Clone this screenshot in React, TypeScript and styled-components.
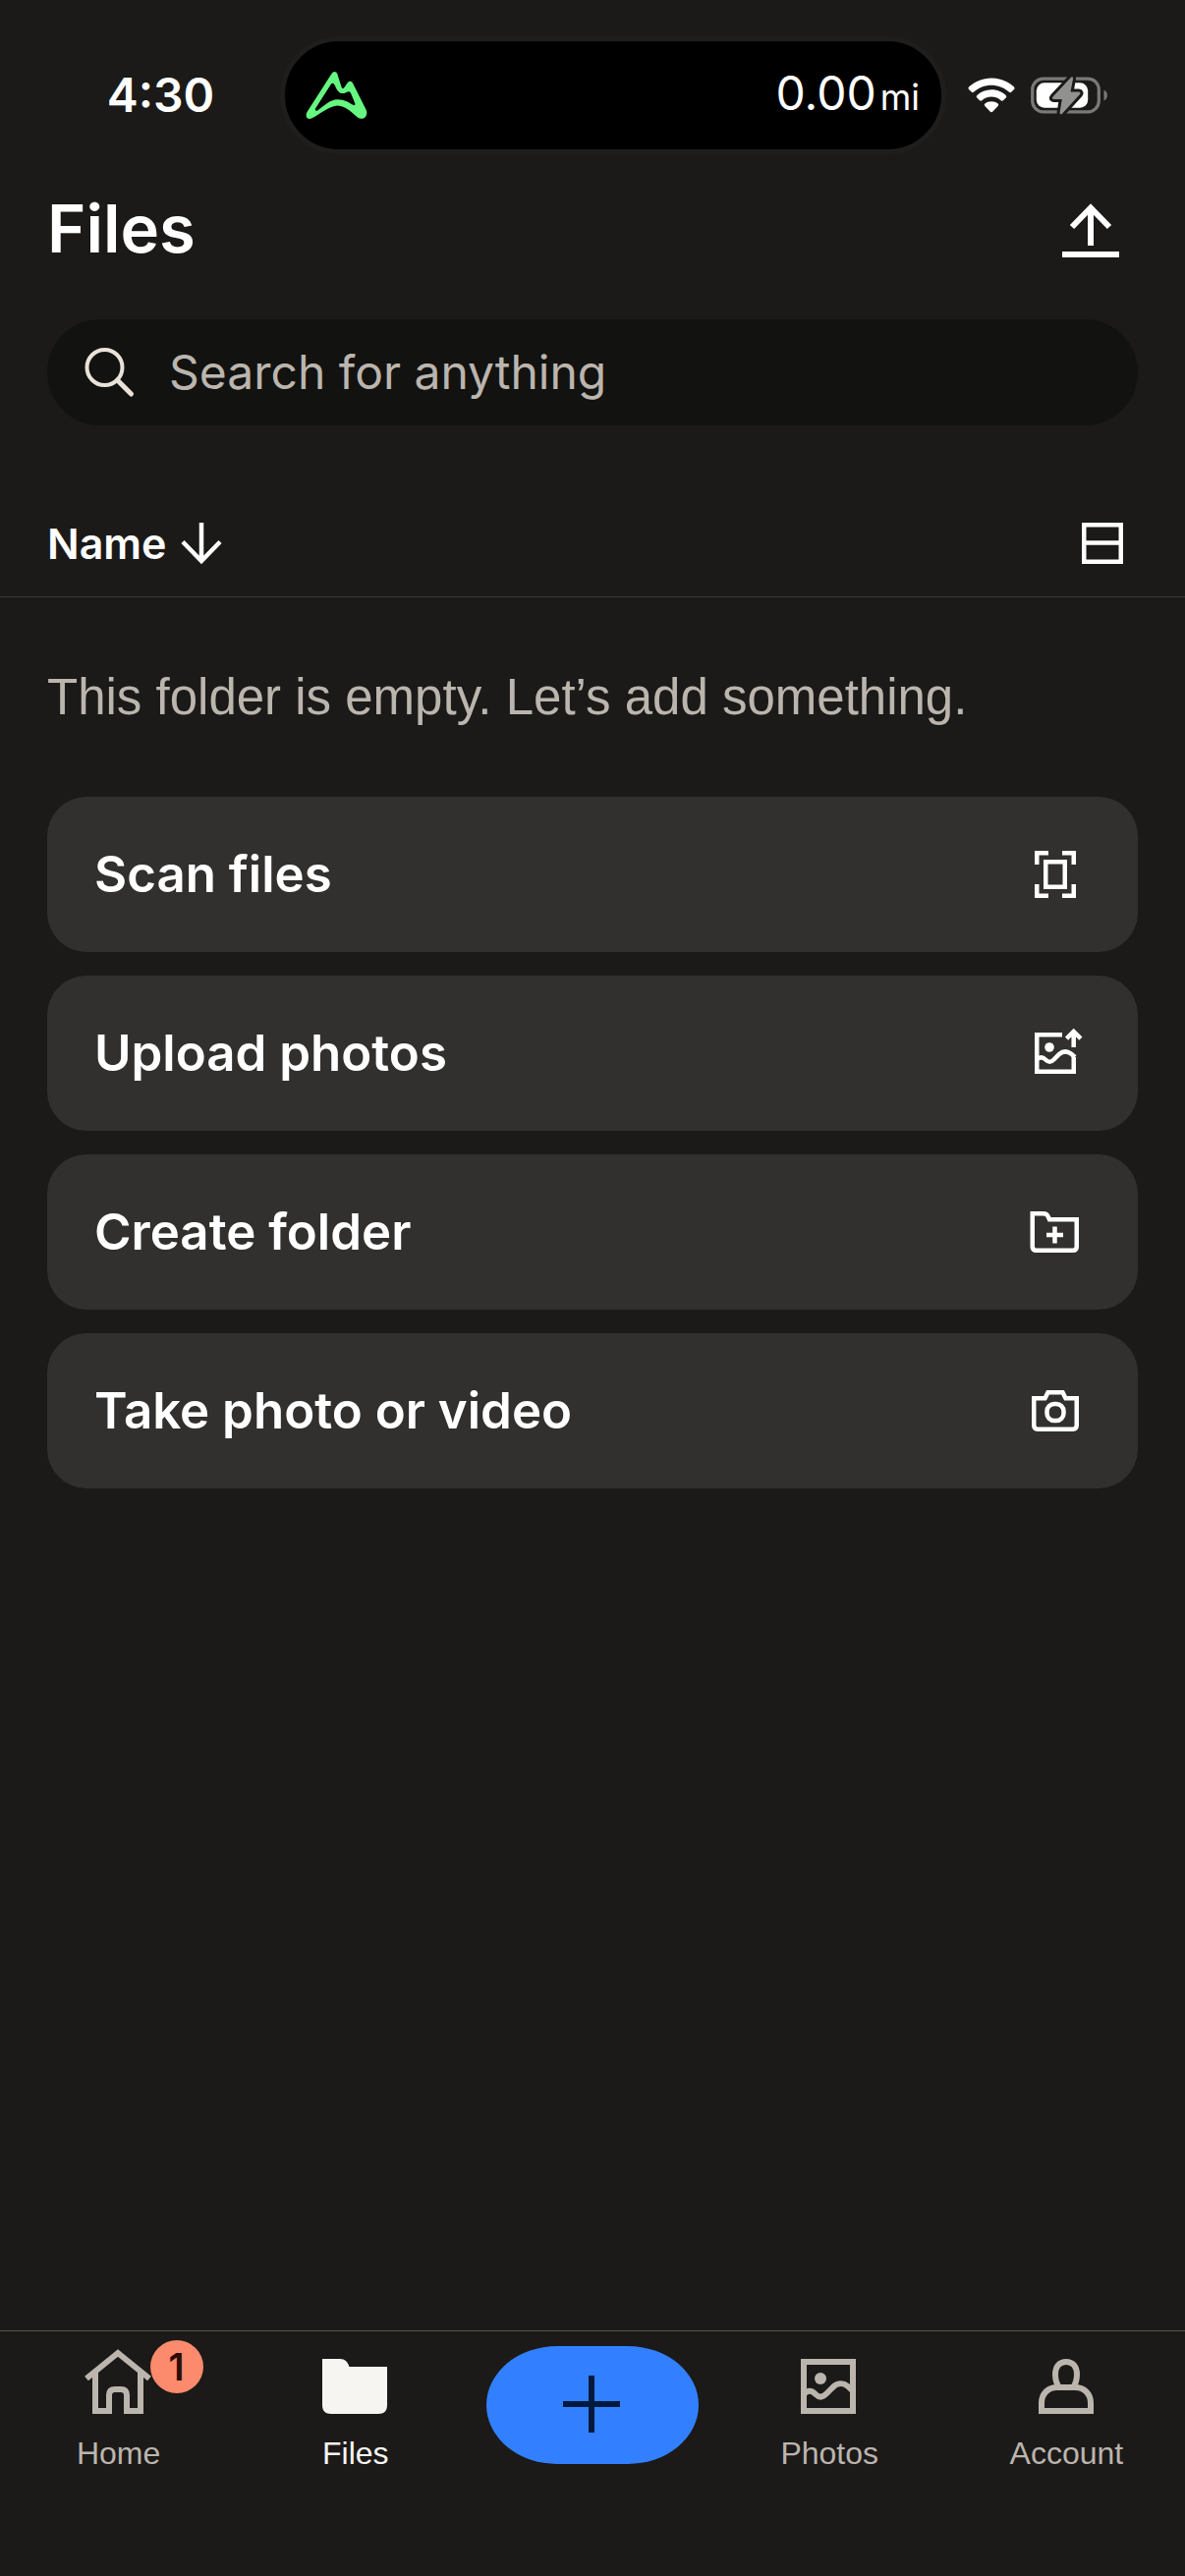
import React from "react";
import styled, { createGlobalStyle } from "styled-components";

const sans = `Inter, "Liberation Sans", sans-serif`;
const grotesk = `"Liberation Sans", Arial, sans-serif`;

const color = {
  page: "#1b1a18",
  field: "#121210",
  card: "#31302e",
  text: "#ffffff",
  muted: "#bbb5ae",
  line: "#3a3937",
  tabLine: "#57544a",
  accent: "#3280ff",
  badge: "#fb8b6c",
};

const GlobalStyle = createGlobalStyle`
  *, *::before, *::after { box-sizing: border-box; }
  body { margin: 0; background: ${color.page}; }
  button { border: 0; padding: 0; margin: 0; background: none; color: inherit; cursor: pointer; }
  svg { display: block; flex: none; }
`;

const Screen = styled.div`
  display: flex;
  flex-direction: column;
  min-height: 100vh;
  background: ${color.page};
  color: ${color.text};
  font-family: ${sans};
`;

const StatusBar = styled.div`
  display: grid;
  grid-template-columns: 1fr 678px 1fr;
  align-items: center;
  padding: 37px 0 0 42px;
`;

const Clock = styled.time`
  justify-self: center;
  font-size: 48px;
  line-height: 60px;
  font-weight: 600;
`;

const Island = styled.div`
  display: flex;
  align-items: center;
  justify-content: space-between;
  height: 120px;
  padding: 0 22px 0 21px;
  border: 5px solid #1f1e1d;
  border-radius: 60px;
  background: #000;
`;

const Distance = styled.span`
  font-size: 48px;
  line-height: 60px;

  small {
    padding-left: 4px;
    font-size: 36px;
  }
`;

const StatusIcons = styled.div`
  display: flex;
  align-items: center;
  gap: 16px;
  padding-left: 22px;
`;

const Header = styled.header`
  display: flex;
  align-items: center;
  justify-content: space-between;
  padding: 28px 60px 0 48px;
`;

const Title = styled.h1`
  margin: 0;
  font-size: 67px;
  line-height: 96px;
  font-weight: 600;
`;

const IconButton = styled.button`
  display: flex;
`;

const SearchField = styled.label`
  display: flex;
  align-items: center;
  gap: 32px;
  height: 108px;
  margin: 44px 48px 0;
  padding: 0 36px;
  border-radius: 54px;
  background: ${color.field};
`;

const SearchInput = styled.input`
  flex: 1;
  min-width: 0;
  padding: 0;
  border: 0;
  outline: 0;
  background: none;
  color: ${color.text};
  font-family: ${sans};
  font-size: 48px;
  line-height: 60px;

  &::placeholder {
    color: ${color.muted};
    opacity: 1;
  }
`;

const SortBar = styled.div`
  display: flex;
  align-items: center;
  justify-content: space-between;
  height: 108px;
  margin-top: 67px;
  padding: 0 48px 2px;
  border-bottom: 1px solid ${color.line};
`;

const SortButton = styled.button`
  display: flex;
  align-items: center;
  font-family: ${sans};
  font-size: 43px;
  line-height: 60px;
  font-weight: 600;
`;

const Content = styled.main`
  flex: 1;
  padding: 68px 48px;
`;

const EmptyNote = styled.p`
  margin: 0 0 67px;
  color: ${color.muted};
  font-family: ${grotesk};
  font-size: 51px;
  line-height: 68px;
`;

const ActionList = styled.ul`
  display: grid;
  gap: 24px;
  margin: 0;
  padding: 0;
  list-style: none;
`;

const ActionCard = styled.button`
  display: flex;
  align-items: center;
  justify-content: space-between;
  width: 100%;
  height: 158px;
  padding: 0 48px;
  border-radius: 40px;
  background: ${color.card};
  font-family: ${sans};
  font-size: 51px;
  line-height: 60px;
  font-weight: 600;
`;

const TabBar = styled.nav`
  display: grid;
  grid-template-columns: repeat(5, 1fr);
  justify-items: center;
  align-items: start;
  height: 250px;
  border-top: 1px solid ${color.tabLine};
`;

const Tab = styled.a<{ $active?: boolean }>`
  position: relative;
  display: flex;
  flex-direction: column;
  align-items: center;
  padding-top: 8px;
  color: ${(p) => (p.$active ? "#f7f5f2" : color.muted)};
  font-family: ${grotesk};
  font-size: 32px;
  line-height: 40px;
  text-decoration: none;
`;

const Badge = styled.span`
  position: absolute;
  top: 9px;
  left: calc(50% + 32px);
  width: 54px;
  height: 54px;
  border-radius: 27px;
  background: ${color.badge};
  color: #2d0c06;
  font-family: ${sans};
  font-size: 38px;
  line-height: 54px;
  font-weight: 600;
  text-align: center;
`;

const AddButton = styled.button`
  display: flex;
  align-items: center;
  justify-content: center;
  width: 216px;
  height: 120px;
  margin-top: 15px;
  border-radius: 72px / 60px;
  background: ${color.accent};
`;

const Stroke = ({
  size,
  width,
  children,
}: {
  size: number;
  width: number;
  children: React.ReactNode;
}) => (
  <svg
    width={size}
    height={size}
    viewBox={`0 0 ${size} ${size}`}
    fill="none"
    stroke="currentColor"
    strokeWidth={width}
    aria-hidden="true"
  >
    {children}
  </svg>
);

const MountainLogo = () => (
  <svg width="64" height="50" viewBox="0 0 64 50" aria-hidden="true">
    <path
      fill="#66f780"
      fillRule="evenodd"
      d="M26.5 3C28 .3 31.200 .3 32.300 3.200L36.500 16.500C37.200 18.600 38.500 18.600 39.600 16.800L42.500 12.500C44 10.200 47 10.200 48.200 13L61.500 39.500C64.500 46 58.500 51.500 53 47.500C48.500 44.300 41.500 35.500 32.500 35.500C25 35.500 14 44.500 6.500 48.300C2 50.500-1 46.500 1.500 42ZM28.800 13.300C27.600 12.300 26.400 12.700 25.500 14.200L10.300 38C9 40.300 10.400 41.500 12.500 40.200C18.500 36 24.500 29.200 32.500 29.200C40.500 29.200 44 32.500 48.300 34.800C50 35.700 50.800 34.800 50.200 33L46 22.800C45.200 21 43.800 20.800 42 21.700C39.500 23.400 36 23.600 33.800 21.500C31.300 19.500 30.500 15.500 28.800 13.300Z"
    />
  </svg>
);

const WifiIcon = () => (
  <svg width="48" height="36" viewBox="0 0 48 36" fill="#fff" aria-hidden="true">
    <path d="M24 .5C15 .5 7 4 1.200 9.300C.3 10.200.3 11.200 1 12L3.600 14.600C4.400 15.400 5.300 15.300 6.200 14.600C11 10.300 17.200 7.800 24 7.800S37 10.300 41.800 14.600C42.700 15.300 43.600 15.400 44.400 14.600L47 12C47.700 11.200 47.700 10.200 46.800 9.300C41 4 33 .5 24 .5Z" />
    <path d="M24 12.300C18.300 12.300 13.200 14.400 9.300 17.900C8.500 18.700 8.500 19.700 9.300 20.500L12 23.200C12.800 23.900 13.600 23.800 14.400 23.200C17 21 20.300 19.600 24 19.600S31 21 33.600 23.200C34.400 23.800 35.200 23.900 36 23.200L38.700 20.500C39.500 19.700 39.500 18.700 38.700 17.900C34.800 14.400 29.700 12.300 24 12.300Z" />
    <path d="M24 24.200C21.500 24.200 19.200 25.100 17.400 26.500C16.600 27.200 16.600 28.100 17.400 28.900L22.600 34.500C23.500 35.400 24.500 35.400 25.400 34.500L30.600 28.900C31.400 28.100 31.400 27.200 30.600 26.500C28.800 25.100 26.500 24.200 24 24.200Z" />
  </svg>
);

const BatteryIcon = () => (
  <svg width="80" height="42" viewBox="0 0 80 42" aria-hidden="true">
    <rect x="1.700" y="4.200" width="67.600" height="33.600" rx="11" fill="none" stroke="#7a7978" strokeWidth="3.200" />
    <path d="M74.500 15.500C79 17.500 79 24.500 74.500 26.500Z" fill="#7a7978" />
    <rect x="5.800" y="8.300" width="52.400" height="25.400" rx="8" fill="#fff" />
    <path
      d="M40.500 3.200L22.500 22.600C21.400 23.900 21.900 24.900 23.400 24.900H31.800L29.600 38.500C29.400 40.400 31 40.900 32.200 39.400L50 20C51 18.700 50.500 17.600 49 17.600H40.500L43 4.200C43.200 2.200 41.800 1.700 40.500 3.200Z"
      fill="#91918f"
      stroke="#1b1a18"
      strokeWidth="6"
      paintOrder="stroke"
    />
  </svg>
);

const UploadIcon = () => (
  <Stroke size={72} width={6}>
    <path d="M36 53V16M17 34L36 14.500L55 34" />
    <path d="M7 62H65" />
  </Stroke>
);

const SearchIcon = () => (
  <svg width="56" height="56" viewBox="0 0 56 56" fill="none" stroke="#e9e2d8" aria-hidden="true">
    <circle cx="22.500" cy="23" r="18" strokeWidth="4" />
    <path d="M35.500 36L49.500 50" strokeWidth="5" strokeLinecap="round" />
  </svg>
);

const ArrowDownIcon = () => (
  <Stroke size={72} width={4.5}>
    <path d="M36 15V53M17 34.500L36 54L55 34.500" />
  </Stroke>
);

const ListViewIcon = () => (
  <Stroke size={72} width={4.5}>
    <path d="M17.250 17.250H54.750V54.750H17.250ZM17.250 35.500H54.750" />
  </Stroke>
);

const ScanIcon = () => (
  <Stroke size={72} width={4.5}>
    <path d="M26.250 23.250H45.750V48.750H26.250Z" />
    <path d="M17.250 26V14.250H29M43 14.250H54.750V26M54.750 46V57.750H43M29 57.750H17.250V46" />
  </Stroke>
);

const UploadPhotoIcon = () => (
  <Stroke size={72} width={4.5}>
    <path d="M43 17.250H17.250V54.750H54.750V40" />
    <path d="M17 42.500C20 39.500 23 39.500 26 42.500C29 45.500 31.500 45.500 34.500 42.500L40 37C44 33.500 48 33.500 52 36.500L56 40" />
    <path d="M54.700 30V14M47.500 21.200L54.700 14L61.900 21.200" />
    <circle cx="30" cy="30" r="4.800" fill="currentColor" stroke="none" />
  </Stroke>
);

const CreateFolderIcon = () => (
  <Stroke size={72} width={4.5}>
    <path d="M12.750 17.250H24C27 17.250 28.300 19 29 21L30 23.250H57.750V50.500C57.750 53 56.500 54.750 54 54.750H16.500C14 54.750 12.750 53 12.750 50.500Z" />
    <path d="M35.500 30.500V47.500M27 39H44" />
  </Stroke>
);

const CameraIcon = () => (
  <Stroke size={72} width={4.5}>
    <path d="M14.250 23.250H25.500L28.500 17.250H43.500L46.500 23.250H57.750V50.500C57.750 53 56.500 54.750 54 54.750H18C15.500 54.750 14.250 53 14.250 50.500Z" />
    <rect x="27.500" y="29" width="17" height="17" rx="7.500" />
  </Stroke>
);

const HomeIcon = () => (
  <Stroke size={96} width={6}>
    <path d="M15 40L47 14L79 40" />
    <path d="M24 33V73H38V57C38 53 40 51 44 51H50C54 51 56 53 56 57V73H70V33" />
  </Stroke>
);

const FolderIcon = () => (
  <svg width="96" height="96" viewBox="0 0 96 96" fill="currentColor" aria-hidden="true">
    <path d="M14 20H32C37 20 40 23 41.500 28H80V67C80 73 77 76 71 76H23C17 76 14 73 14 67Z" />
  </svg>
);

const PhotosIcon = () => (
  <Stroke size={96} width={6}>
    <path d="M22 23H72V73H22Z" />
    <path d="M22 56C26 51.500 30 51.500 34 56C37.500 59.500 41 59.500 45 55.500L51 49.500C56 44 62 44 67 48L73 53.500" />
    <circle cx="39" cy="40" r="6" fill="currentColor" stroke="none" />
  </Stroke>
);

const AccountIcon = () => (
  <Stroke size={96} width={6}>
    <path d="M41 49C38 45 37 41 37 36C37 28 41 23 48 23S59 28 59 36C59 41 58 45 55 49" />
    <path d="M23 73V65C23 55 30 49 39 49H57C66 49 73 55 73 65V73Z" />
  </Stroke>
);

const PlusIcon = () => (
  <svg width="60" height="60" viewBox="0 0 60 60" stroke="#001a3d" strokeWidth="6" aria-hidden="true">
    <path d="M29 0V58M0 29H58" />
  </svg>
);

const actions = [
  { label: "Scan files", Icon: ScanIcon },
  { label: "Upload photos", Icon: UploadPhotoIcon },
  { label: "Create folder", Icon: CreateFolderIcon },
  { label: "Take photo or video", Icon: CameraIcon },
];

export default function App() {
  return (
    <Screen>
      <GlobalStyle />
      <StatusBar>
        <Clock>4:30</Clock>
        <Island>
          <MountainLogo />
          <Distance>
            0.00<small>mi</small>
          </Distance>
        </Island>
        <StatusIcons>
          <WifiIcon />
          <BatteryIcon />
        </StatusIcons>
      </StatusBar>

      <Header>
        <Title>Files</Title>
        <IconButton aria-label="Upload">
          <UploadIcon />
        </IconButton>
      </Header>

      <SearchField>
        <SearchIcon />
        <SearchInput type="search" placeholder="Search for anything" aria-label="Search" />
      </SearchField>

      <SortBar>
        <SortButton>
          Name
          <ArrowDownIcon />
        </SortButton>
        <IconButton aria-label="Change view">
          <ListViewIcon />
        </IconButton>
      </SortBar>

      <Content>
        <EmptyNote>This folder is empty. Let’s add something.</EmptyNote>
        <ActionList>
          {actions.map(({ label, Icon }) => (
            <li key={label}>
              <ActionCard>
                {label}
                <Icon />
              </ActionCard>
            </li>
          ))}
        </ActionList>
      </Content>

      <TabBar>
        <Tab href="#home">
          <HomeIcon />
          Home
          <Badge>1</Badge>
        </Tab>
        <Tab href="#files" $active aria-current="page">
          <FolderIcon />
          Files
        </Tab>
        <AddButton aria-label="Add">
          <PlusIcon />
        </AddButton>
        <Tab href="#photos">
          <PhotosIcon />
          Photos
        </Tab>
        <Tab href="#account">
          <AccountIcon />
          Account
        </Tab>
      </TabBar>
    </Screen>
  );
}
